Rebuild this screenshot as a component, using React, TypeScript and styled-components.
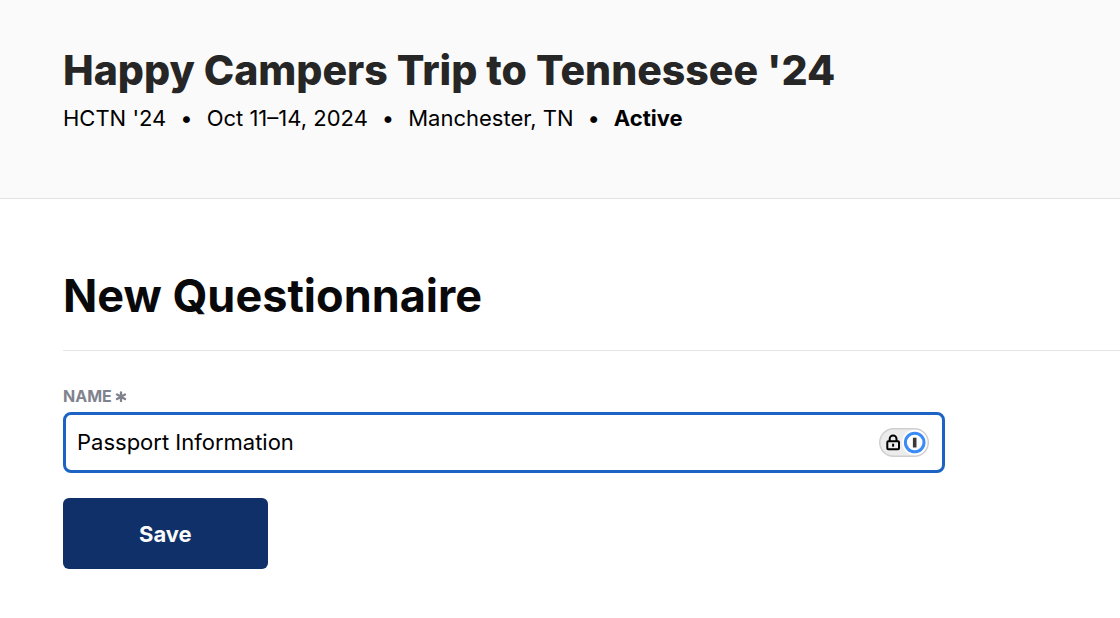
import React from 'react';
import styled, { createGlobalStyle } from 'styled-components';

const GlobalStyle = createGlobalStyle`
  *, *::before, *::after { box-sizing: border-box; }
  body {
    margin: 0;
    background: #fff;
    color: #000;
    font-family: Inter, "Liberation Sans", sans-serif;
  }
`;

const Header = styled.header`
  background: #fafafa;
  border-bottom: 1px solid #e2e2e4;
  padding: 45px 63px 63px;
`;

const TripTitle = styled.h1`
  margin: 0;
  font-size: 41px;
  line-height: 50px;
  font-weight: 800;
  color: #262626;
`;

const Facts = styled.ul`
  display: flex;
  flex-wrap: wrap;
  margin: 7px 0 0;
  padding: 0;
  list-style: none;
  font-size: 22px;
  line-height: 33px;
`;

const Fact = styled.li<{ $strong?: boolean }>`
  font-weight: ${(p) => (p.$strong ? 700 : 400)};
  &:not(:first-child)::before {
    content: "•";
    margin: 0 14px;
    font-weight: 400;
  }
`;

const Main = styled.main`
  padding: 69px 0 48px 63px;
`;

const PageTitle = styled.h2`
  margin: 0;
  padding-bottom: 26px;
  border-bottom: 1px solid #e4e4e7;
  font-size: 45px;
  line-height: 56px;
  font-weight: 700;
  color: #09090b;
`;

const Form = styled.form`
  max-width: 882px;
  padding-top: 35px;
`;

const Label = styled.label`
  display: flex;
  align-items: center;
  gap: 3px;
  font-size: 16px;
  line-height: 20px;
  font-weight: 700;
  color: #80838e;
`;

const Field = styled.div`
  position: relative;
  margin-top: 6px;
`;

const TextInput = styled.input`
  display: block;
  width: 100%;
  height: 61px;
  padding: 0 76px 2px 11px;
  border: 3px solid #1d63c4;
  border-radius: 8px;
  background: #fff;
  font: inherit;
  font-size: 22px;
  color: #000;
  outline: none;
`;

const FillButton = styled.button`
  position: absolute;
  right: 16px;
  top: 16px;
  width: 50px;
  height: 29px;
  padding: 0;
  border: 0;
  background: none;
  svg { display: block; }
`;

const SaveButton = styled.button`
  display: block;
  margin-top: 25px;
  padding: 18px 76px 17px;
  border: 0;
  border-radius: 6px;
  background: #0f3068;
  color: #fafafa;
  font: inherit;
  font-size: 22px;
  line-height: 36px;
  font-weight: 700;
`;

export default function App() {
  return (
    <>
      <GlobalStyle />
      <Header>
        <TripTitle>Happy Campers Trip to Tennessee '24</TripTitle>
        <Facts>
          <Fact>HCTN '24</Fact>
          <Fact>Oct 11–14, 2024</Fact>
          <Fact>Manchester, TN</Fact>
          <Fact $strong>Active</Fact>
        </Facts>
      </Header>
      <Main>
        <PageTitle>New Questionnaire</PageTitle>
        <Form onSubmit={(e) => e.preventDefault()}>
          <Label htmlFor="name">
            NAME
            <svg width="12" height="12" viewBox="0 0 12 12" aria-hidden="true">
              <path d="M6 2.500v8.600M2 4.500l8 4.600M10 4.500l-8 4.600" stroke="currentColor" strokeWidth="2.3" strokeLinecap="round" fill="none" />
            </svg>
          </Label>
          <Field>
            <TextInput id="name" type="text" defaultValue="Passport Information" required />
            <FillButton type="button" aria-label="Fill from password manager">
              <svg width="50" height="29" viewBox="0 0 50 29">
                <rect x=".75" y=".75" width="48.5" height="27.5" rx="13.75" fill="#ececec" stroke="#cfcfcf" strokeWidth="1.5" />
                <rect x="8.300" y="13.300" width="11.700" height="7.900" rx="1" fill="none" stroke="#000" strokeWidth="2" />
                <path d="M10.700 13v-2.200a3.400 3.400 0 0 1 6.800 0v2.200" fill="none" stroke="#000" strokeWidth="2" />
                <path d="M14.100 15.700v3" stroke="#000" strokeWidth="2" />
                <circle cx="35.700" cy="14.500" r="12.700" fill="#fff" />
                <circle cx="35.700" cy="14.500" r="9.300" fill="#fff" stroke="#3b8cf5" strokeWidth="3" />
                <path d="M35.700 9.700v9.800" stroke="#3a3a3a" strokeWidth="3.600" />
              </svg>
            </FillButton>
          </Field>
          <SaveButton type="submit">Save</SaveButton>
        </Form>
      </Main>
    </>
  );
}
